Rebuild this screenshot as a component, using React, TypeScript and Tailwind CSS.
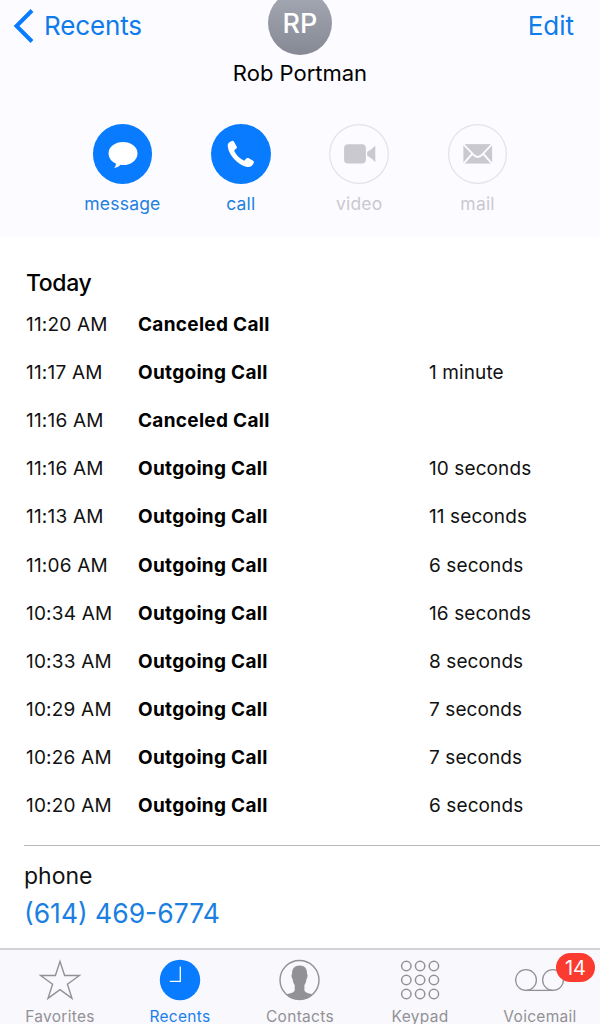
import type { ReactNode } from "react"

const calls = [
  { time: "11:20 AM", type: "Canceled Call", duration: "" },
  { time: "11:17 AM", type: "Outgoing Call", duration: "1 minute" },
  { time: "11:16 AM", type: "Canceled Call", duration: "" },
  { time: "11:16 AM", type: "Outgoing Call", duration: "10 seconds" },
  { time: "11:13 AM", type: "Outgoing Call", duration: "11 seconds" },
  { time: "11:06 AM", type: "Outgoing Call", duration: "6 seconds" },
  { time: "10:34 AM", type: "Outgoing Call", duration: "16 seconds" },
  { time: "10:33 AM", type: "Outgoing Call", duration: "8 seconds" },
  { time: "10:29 AM", type: "Outgoing Call", duration: "7 seconds" },
  { time: "10:26 AM", type: "Outgoing Call", duration: "7 seconds" },
  { time: "10:20 AM", type: "Outgoing Call", duration: "6 seconds" },
]

const MessageIcon = () => (
  <svg viewBox="0 0 60 60" className="size-full" fill="#fff">
    <path d="M30.300 18.200c8.200 0 14.600 4.900 14.600 11.500s-6.400 11.700-14.600 11.700c-.9 0-1.800 0-2.600-.2-1.500 1.700-3.900 3-6.300 3.300 1.100-1.200 1.800-2.700 1.700-4.600-4.500-2-7.400-5.800-7.400-10.200 0-6.600 6.400-11.500 14.600-11.500z" />
  </svg>
)

const CallIcon = () => (
  <svg viewBox="0 0 60 60" className="size-full" fill="#fff">
    <path d="M18.500 18.500l2.500-1.300c.8-.4 1.700-.2 2.200.6l2.700 4.800c.4.800.3 1.600-.4 2.100l-1.500 1.200c-.6.500-.7 1-.4 1.700 1.900 3.900 5 7 8.900 9 .7.400 1.300.3 1.800-.3l1.200-1.500c.6-.7 1.400-.8 2.200-.4l4.800 2.700c.8.500 1 1.300.6 2.200-1.400 2.900-3.500 4.600-6.600 4-9.100-1.700-18.900-11.900-19.600-20.600-.2-1.900.4-3.400 1.600-4.200z" />
  </svg>
)

const VideoIcon = () => (
  <svg viewBox="0 0 60 60" className="size-full" fill="#cac9cf">
    <rect x="15.200" y="20.300" width="22" height="19.600" rx="4" />
    <path d="M38.500 28.200q4.500-2.300 8.200-6.600v17q-3.700-4.300-8.200-6.600z" />
  </svg>
)

const MailIcon = () => (
  <svg viewBox="0 0 60 60" className="size-full">
    <rect x="15.500" y="20.300" width="29" height="19.600" fill="#cac9cf" />
    <path d="M15 19.800l11.300 11.800q3.700 3.200 7.400 0L45 19.800M15 40.700l9.500-10.700M45 40.700l-9.500-10.700" fill="none" stroke="#fcfbff" strokeWidth="1.900" />
  </svg>
)

const StarIcon = () => (
  <svg viewBox="0 0 44 42" className="h-[42px] w-[44px]" fill="none" stroke="#929196" strokeWidth="1.400">
    <path d="M22 2.500l4.600 14h14.800L29.400 25.200l4.600 14.100L22 30.600l-12 8.700 4.600-14.100L2.600 16.500h14.800z" />
  </svg>
)

const ClockIcon = () => (
  <svg viewBox="0 0 42 42" className="size-[42px]">
    <circle cx="21" cy="21" r="20.200" fill="#087bfe" />
    <path d="M21.300 7.500v14.900H10.800" fill="none" stroke="#fff" strokeWidth="1.300" />
  </svg>
)

const ContactIcon = () => (
  <svg viewBox="0 0 42 42" className="size-[42px]">
    <circle cx="20.500" cy="21" r="19.500" fill="none" stroke="#929196" strokeWidth="1.400" />
    <path d="M20.700 6.500c5 0 7.700 3.200 7.300 8.500 1 .5.800 3-.6 5.500-.3 2.600-1 4.300-2 5.500v5.300c.3 2 3.600 3 8.500 4.300C30.500 39.200 26 40.800 20.500 40.800S10.500 39.200 7.100 35.600c4.900-1.300 8.300-2.300 8.600-4.300V26c-1-1.200-1.700-2.900-2-5.500-1.400-2.500-1.600-5-.6-5.500-.4-5.300 2.600-8.500 7.600-8.500z" fill="#929196" />
  </svg>
)

const KeypadIcon = () => (
  <svg viewBox="0 0 42 42" className="size-[42px]" fill="none" stroke="#929196" strokeWidth="1.500">
    {[7, 21, 35].map((y) => [7.3, 21.1, 34.9].map((x) => <circle key={`${x}-${y}`} cx={x} cy={y} r="4.700" />))}
  </svg>
)

const VoicemailIcon = () => (
  <svg viewBox="0 0 50 42" className="h-[42px] w-[50px]" fill="none" stroke="#929196" strokeWidth="1.300">
    <circle cx="11" cy="21" r="10.400" />
    <circle cx="38" cy="21" r="10.400" />
    <path d="M11 31.400h27" />
  </svg>
)

const actions = [
  { label: "message", icon: <MessageIcon />, enabled: true },
  { label: "call", icon: <CallIcon />, enabled: true },
  { label: "video", icon: <VideoIcon />, enabled: false },
  { label: "mail", icon: <MailIcon />, enabled: false },
]

const tabs = [
  { label: "Favorites", icon: <StarIcon /> },
  { label: "Recents", icon: <ClockIcon />, active: true },
  { label: "Contacts", icon: <ContactIcon /> },
  { label: "Keypad", icon: <KeypadIcon /> },
  { label: "Voicemail", icon: <VoicemailIcon />, badge: 14 },
]

const Action = ({ label, icon, enabled }: { label: string; icon: ReactNode; enabled: boolean }) => (
  <button className="flex w-[118.400px] flex-col items-center">
    <span className={`size-[59.500px] overflow-hidden rounded-full ${enabled ? "bg-[#087bfe]" : "shadow-[inset_0_0_0_1.300px_#e4e3e9]"}`}>{icon}</span>
    <span className={`mt-2 text-[17.500px] leading-6 tracking-[0.200px] ${enabled ? "text-[#2280de]" : "text-[#cac9cf]"}`}>{label}</span>
  </button>
)

const Header = () => (
  <header className="h-[238px] bg-[#fcfbff]">
    <div className="grid h-[88px] grid-cols-[1fr_auto_1fr] items-start">
      <button className="flex items-center pt-2 pl-[13px] text-[26px] leading-[34px] tracking-[-0.150px] text-[#0f7ceb]">
        <svg viewBox="0 0 21 34" className="mr-[10px] h-[34px] w-[21px]" fill="none" stroke="#087bfe" strokeWidth="4">
          <path d="M19 1.500L3.500 17 19 32.500" />
        </svg>
        <span className="pt-px">Recents</span>
      </button>
      <div className="flex flex-col items-center">
        <div className="-mt-[9px] flex size-16 items-center justify-center rounded-full bg-linear-to-b from-[#a5a9b5] to-[#868993] pt-[3px] text-[27px] font-medium text-white">RP</div>
        <h1 className="mt-[3px] text-[22px] leading-[30px] text-black">Rob Portman</h1>
      </div>
      <button className="justify-self-end pt-[9px] pr-[26px] text-[26px] leading-[34px] text-[#0f7ceb]">Edit</button>
    </div>
    <div className="flex justify-center pt-9">
      {actions.map((action) => <Action key={action.label} {...action} />)}
    </div>
  </header>
)

const CallList = () => (
  <section className="h-[607px] pt-7 pl-[26px]">
    <h2 className="text-[23px] leading-[34px] font-medium tracking-[-0.400px] text-black">Today</h2>
    <ul className="pt-px">
      {calls.map(({ time, type, duration }) => (
        <li key={time + type} className="grid h-[48.150px] grid-cols-[112px_291px_1fr] items-center text-[19px]">
          <span className="tracking-[0.200px]">{time}</span>
          <span className="font-bold tracking-[0.300px] text-black">{type}</span>
          <span className="tracking-[0.100px]">{duration}</span>
        </li>
      ))}
    </ul>
  </section>
)

const TabBar = () => (
  <nav className="grid h-[76px] grid-cols-5 overflow-hidden border-t-2 border-[#d3d1d5] bg-[#f9f8fc]">
    {tabs.map(({ label, icon, active, badge }) => (
      <button key={label} className="flex flex-col items-center pt-[9px]">
        <span className="relative">
          {icon}
          {badge && <span className="absolute -top-[6px] left-[41px] flex h-[29px] w-[39px] items-center justify-center rounded-full bg-[#fc3b30] text-[20px] text-white">{badge}</span>}
        </span>
        <span className={`mt-1 text-[15.500px] leading-6 tracking-[0.300px] ${active ? "text-[#1a7fee]" : "text-[#929196]"}`}>{label}</span>
      </button>
    ))}
  </nav>
)

export default function App() {
  return (
    <div className="flex h-screen w-[600px] flex-col overflow-hidden bg-white font-[Inter,sans-serif] text-[#111]">
      <Header />
      <CallList />
      <section className="ml-6 h-[103px] border-t border-[#b9b9bb] pt-[13px]">
        <div className="text-[23px] leading-[34px]">phone</div>
        <a className="block text-[26.500px] leading-[41px] text-[#1a7fe0]">(614) 469-6774</a>
      </section>
      <TabBar />
    </div>
  )
}
